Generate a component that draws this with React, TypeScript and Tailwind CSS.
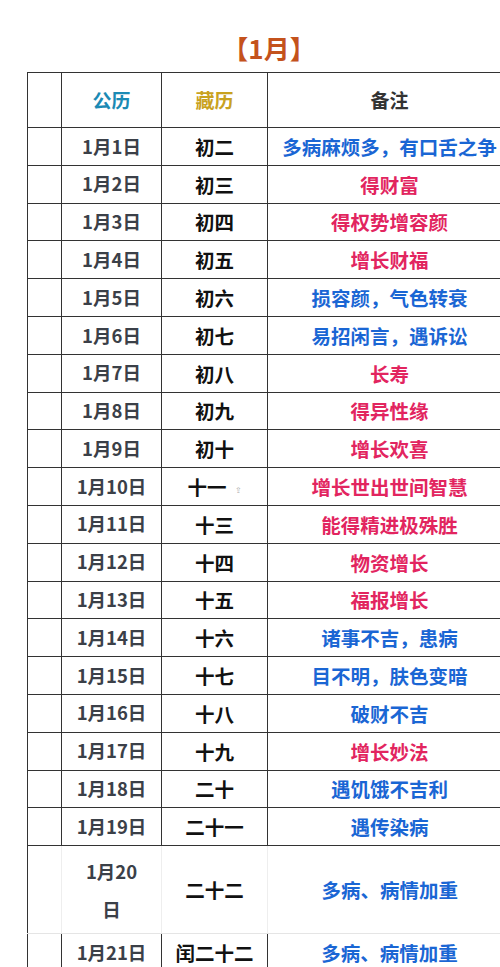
import React from 'react';

type Row = { date: React.ReactNode; tib: string; note: string; blue: boolean };

const rows: Row[] = [
  { date: '1月1日', tib: '初二', note: '多病麻烦多，有口舌之争', blue: true },
  { date: '1月2日', tib: '初三', note: '得财富', blue: false },
  { date: '1月3日', tib: '初四', note: '得权势增容颜', blue: false },
  { date: '1月4日', tib: '初五', note: '增长财福', blue: false },
  { date: '1月5日', tib: '初六', note: '损容颜，气色转衰', blue: true },
  { date: '1月6日', tib: '初七', note: '易招闲言，遇诉讼', blue: true },
  { date: '1月7日', tib: '初八', note: '长寿', blue: false },
  { date: '1月8日', tib: '初九', note: '得异性缘', blue: false },
  { date: '1月9日', tib: '初十', note: '增长欢喜', blue: false },
  { date: '1月10日', tib: '十一', note: '增长世出世间智慧', blue: false },
  { date: '1月11日', tib: '十三', note: '能得精进极殊胜', blue: false },
  { date: '1月12日', tib: '十四', note: '物资增长', blue: false },
  { date: '1月13日', tib: '十五', note: '福报增长', blue: false },
  { date: '1月14日', tib: '十六', note: '诸事不吉，患病', blue: true },
  { date: '1月15日', tib: '十七', note: '目不明，肤色变暗', blue: true },
  { date: '1月16日', tib: '十八', note: '破财不吉', blue: true },
  { date: '1月17日', tib: '十九', note: '增长妙法', blue: false },
  { date: '1月18日', tib: '二十', note: '遇饥饿不吉利', blue: true },
  { date: '1月19日', tib: '二十一', note: '遇传染病', blue: true },
];

const font = { fontFamily: '"Noto Sans CJK SC", "Noto Sans", sans-serif' };

export default function App() {
  return (
    <div className="w-[500px] h-[967px] overflow-hidden bg-white" style={font}>
      <div className="w-[484px] ml-[27px]">
        <div className="pt-8 pb-2 leading-8 text-[26px] font-bold text-[#c4521c] text-center">【1月】</div>
        <table className="w-[484px] table-fixed border-collapse text-center font-bold">
          <colgroup>
            <col className="w-[34px]" />
            <col className="w-[100px]" />
            <col className="w-[106px]" />
            <col className="w-[244px]" />
          </colgroup>
          <tbody>
            <tr className="h-[55px] text-[19px]">
              <td className="border border-[#333]"></td>
              <td className="border border-[#333] text-[#1b8ab4]">公历</td>
              <td className="border border-[#333] text-[#c9a21f]">藏历</td>
              <td className="border border-[#333] text-[#333] font-semibold">备注</td>
            </tr>
            {rows.map((r, i) => (
              <tr key={i} className="h-[37.8px]">
                <td className="border border-[#333]"></td>
                <td className="border border-[#333] text-[18.5px] text-[#3b4048] whitespace-nowrap">{r.date}</td>
                <td className="border border-[#333] text-[19.5px] text-[#111] whitespace-nowrap">
                  {r.tib}
                  {i === 9 && <span className="ml-2 text-[8px] text-[#aaa] font-normal align-middle">⇪</span>}
                </td>
                <td className={`border border-[#333] text-[19.5px] whitespace-nowrap ${r.blue ? 'text-[#1a66d4]' : 'text-[#e2255f]'}`}>
                  {r.note}
                </td>
              </tr>
            ))}
            <tr className="h-[88px]">
              <td className="border-l border-l-[#333] border-t border-t-[#333] border-r border-r-[#eee] border-b border-b-[#e5e5e5]"></td>
              <td className="border-t border-t-[#333] border-r border-r-[#eee] border-b border-b-[#e5e5e5] text-[18.5px] leading-[38px] text-[#3b4048]">
                1月20
                <br />日
              </td>
              <td className="border-t border-t-[#333] border-r border-r-[#eee] border-b border-b-[#e5e5e5] text-[19.5px] text-[#111]">二十二</td>
              <td className="border-t border-t-[#333] border-b border-b-[#e5e5e5] text-[19.5px] text-[#1a66d4]">多病、病情加重</td>
            </tr>
            <tr className="h-[38px]">
              <td className="border border-[#333]"></td>
              <td className="border border-[#333] text-[18.5px] text-[#3b4048]">1月21日</td>
              <td className="border border-[#333] text-[19.5px] text-[#111]">闰二十二</td>
              <td className="border border-[#333] text-[19.5px] text-[#1a66d4]">多病、病情加重</td>
            </tr>
          </tbody>
        </table>
      </div>
    </div>
  );
}
